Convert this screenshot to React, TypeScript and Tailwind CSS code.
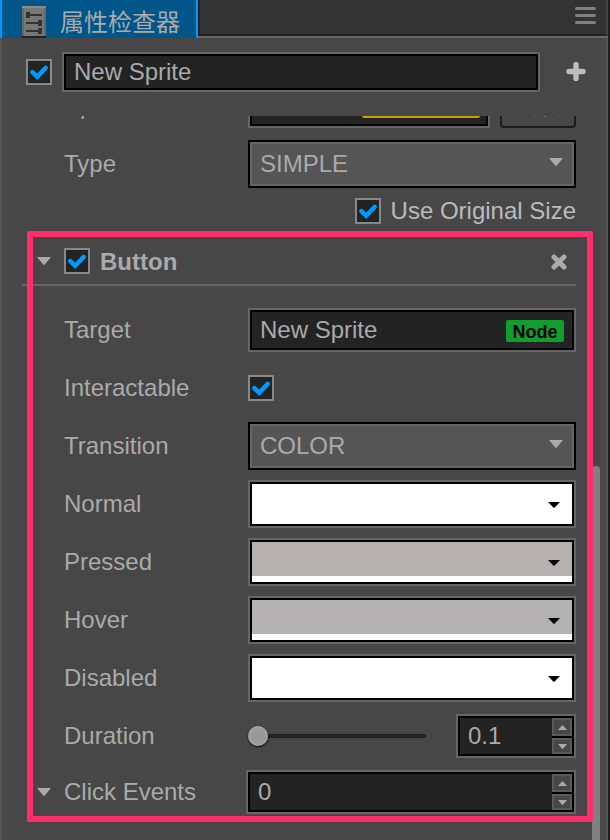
import React from "react";

function Check({ label, id }: { label: string; id?: string }) {
  return (
    <span className="grid h-[26px] w-[26px] shrink-0">
      <input
        id={id}
        type="checkbox"
        defaultChecked
        aria-label={label}
        className="col-start-1 row-start-1 m-0 h-[26px] w-[26px] appearance-none border-2 border-[#888] bg-[#232323]"
      />
      <svg
        viewBox="0 0 26 26"
        className="pointer-events-none col-start-1 row-start-1 h-[26px] w-[26px]"
        aria-hidden="true"
      >
        <path d="M6.4 13.2 L11.2 17.8 L19.6 9" fill="none" stroke="#09f" strokeWidth="4.6" strokeLinecap="round" />
      </svg>
    </span>
  );
}

function Caret({ className }: { className: string }) {
  return (
    <svg viewBox="0 0 14 8" preserveAspectRatio="none" className={className} aria-hidden="true">
      <path d="M0 0H14L7.8 7.4Q7 8 6.2 7.4Z" fill="currentColor" />
    </svg>
  );
}

function Row({ label, htmlFor, children }: { label: string; htmlFor?: string; children: React.ReactNode }) {
  return (
    <div className="flex h-12 items-center">
      <label htmlFor={htmlFor} className="w-[184px] shrink-0">
        {label}
      </label>
      {children}
    </div>
  );
}

function Select({ id, value }: { id: string; value: string }) {
  return (
    <div className="grid h-12 min-w-0 flex-1">
      <select
        id={id}
        defaultValue={value}
        className="col-start-1 row-start-1 h-12 w-full appearance-none border-2 border-black bg-[#555] pl-[10px] text-[24px] leading-[28px] text-[#aaa] shadow-[inset_0_0_0_2px_#666]"
      >
        <option>{value}</option>
      </select>
      <Caret className="pointer-events-none col-start-1 row-start-1 mr-[13px] mt-[18px] h-2 w-[14px] justify-self-end text-[#aaa]" />
    </div>
  );
}

function ColorField({ label, color, alpha }: { label: string; color: string; alpha: boolean }) {
  return (
    <Row label={label}>
      <button
        type="button"
        aria-label={`${label} color`}
        className="flex h-12 min-w-0 flex-1 border-2 border-[#666] bg-black p-[2px]"
      >
        <span className={`grid h-full w-full bg-white ${alpha ? "pb-[6px]" : ""}`}>
          <span className="flex justify-end pr-3 pt-[18px]" style={{ backgroundColor: color }}>
            <Caret className="h-[6px] w-3 shrink-0 text-black" />
          </span>
        </span>
      </button>
    </Row>
  );
}

function NumberField({ id, value, className }: { id: string; value: string; className: string }) {
  return (
    <div className={`flex h-11 border-2 border-[#666] bg-black p-[2px] ${className}`}>
      <input id={id} type="text" inputMode="decimal" defaultValue={value} className="h-9 min-w-0 flex-1 bg-[#232323] pl-2 text-[24px] leading-[28px]" />
      <div className="flex w-5 flex-col gap-[2px]">
        <button type="button" aria-label="Increase" className="flex h-[18px] items-center justify-center border-2 border-[#5a5a5a] bg-[#474747]">
          <Caret className="h-[5px] w-[9px] rotate-180" />
        </button>
        <button type="button" aria-label="Decrease" className="flex h-4 items-center justify-center border-2 border-[#5a5a5a] bg-[#474747]">
          <Caret className="h-[5px] w-[9px]" />
        </button>
      </div>
    </div>
  );
}

function TabIcon() {
  return (
    <svg viewBox="0 0 24 32" className="h-8 w-6 shrink-0" aria-hidden="true">
      <rect width="24" height="32" fill="#666" />
      <rect x="2" y="2" width="20" height="28" fill="#777" />
      <path d="M0 1H24" stroke="#8a8a8a" strokeWidth="2" />
      <path d="M0 31H24" stroke="#222" strokeWidth="2" />
      <path d="M5 9H20M4 17H20M4 25H20" stroke="#333" strokeWidth="2" />
      <path d="M4 6h4v6h-4zM16 14h4v6h-4zM16 22h4v6h-4z" fill="#333" />
    </svg>
  );
}

export default function App() {
  return (
    <main className="flex min-h-screen flex-col border-r-2 border-[#1e1e1e] bg-[#474747] font-['Liberation_Sans','Noto_Sans_CJK_SC',sans-serif] text-[24px] leading-[28px] text-[#aaa]">
      <header className="flex h-[38px]">
        <h1 className="flex w-[198px] shrink-0 items-end gap-[14px] border-x-2 border-[#09f] bg-[#005589] pl-5">
          <TabIcon />
          <span className="h-[29px]">属性检查器</span>
        </h1>
        <div className="flex flex-1 flex-col border-b-2 border-[#666]">
          <div className="flex flex-1 justify-end border-b-2 border-l-2 border-r-2 border-b-[#222] border-l-[#222] border-r-[#444] bg-[#333] pr-[10px] pt-[7px]">
            <button type="button" aria-label="Menu" className="flex h-[17px] w-[21px] flex-col justify-between">
              <span className="h-[3px] w-full rounded-xs bg-[#808080]" />
              <span className="h-[3px] w-full rounded-xs bg-[#808080]" />
              <span className="h-[3px] w-full rounded-xs bg-[#808080]" />
            </button>
          </div>
        </div>
      </header>

      <div className="flex flex-1 flex-col border-l-2 border-r-2 border-[#555]">
        <div className="flex items-center pb-6 pl-6 pr-5 pt-[14px]">
          <Check label="Node active" />
          <input
            type="text"
            aria-label="Node name"
            defaultValue="New Sprite"
            className="ml-[10px] h-10 min-w-0 flex-1 border-2 border-[#666] bg-[#232323] pl-[10px] text-[24px] leading-[28px] shadow-[inset_0_0_0_2px_#000]"
          />
          <button type="button" aria-label="Add component" className="ml-[26px] h-5 w-5 text-[#bbb]">
            <svg viewBox="0 0 20 20" className="h-5 w-5">
              <path d="M10 2.5V16.5M3 9.5H17" stroke="currentColor" strokeWidth="5.4" strokeLinecap="round" />
            </svg>
          </button>
        </div>

        <div className="flex flex-1 overflow-hidden">
          <div className="min-w-0 flex-1 pb-[26px] pl-5">
            <div className="-mt-8 flex h-11 items-center pl-[42px]">
              <span className="w-[184px] shrink-0">Sprite Frame</span>
              <div className="flex h-11 min-w-0 flex-1 items-center justify-end border-2 border-[#666] bg-[#232323] pr-2 shadow-[inset_0_0_0_2px_#000]">
                <span className="h-6 w-[118px] rounded-xs bg-[#c8a000] text-center text-[18px] font-bold leading-[24px] text-black">sprite-frame</span>
              </div>
              <button type="button" className="ml-[10px] h-11 w-[76px] shrink-0 rounded-sm border-2 border-[#1c1c1c] bg-[#484848]">编辑</button>
            </div>

            <div className="flex flex-col gap-[10px] pl-[42px] pt-3">
              <Row label="Type" htmlFor="type">
                <Select id="type" value="SIMPLE" />
              </Row>
              <div className="flex h-[26px] items-center justify-end gap-[10px] text-[#bbb]">
                <Check label="Use Original Size" id="original-size" />
                <label htmlFor="original-size">Use Original Size</label>
              </div>
            </div>

            <section className="relative mt-[7px] pt-[17px]">
              <div className="pointer-events-none absolute -bottom-2 -right-[17px] left-[5px] top-0 z-10 rounded-xs border-[6px] border-[#ff2e6c]" />
              <div className="flex h-[38px] items-start border-b-2 border-[#666]">
                <button type="button" aria-label="Collapse Button" className="ml-[15px] flex h-[26px] w-[14px] items-center">
                  <Caret className="h-2 w-[14px]" />
                </button>
                <div className="ml-[13px] flex flex-1 items-center gap-[10px]">
                  <Check label="Button" id="button-enabled" />
                  <label htmlFor="button-enabled" className="h-[26px] font-bold leading-[28px]">Button</label>
                </div>
                <button type="button" aria-label="Remove Button" className="mr-2 mt-[5px] h-[18px] w-[18px]">
                  <svg viewBox="0 0 18 18" className="h-[18px] w-[18px]">
                    <path d="M4 4L14 14M14 4L4 14" stroke="currentColor" strokeWidth="5" strokeLinecap="round" />
                  </svg>
                </button>
              </div>

              <div className="flex flex-col gap-[10px] pl-[42px] pt-5">
                <Row label="Target">
                  <button type="button" aria-label="Target node" className="flex h-11 min-w-0 flex-1 items-center justify-between border-2 border-[#666] bg-[#232323] pl-[10px] pr-[10px] text-left shadow-[inset_0_0_0_2px_#000]">
                    <span>New Sprite</span>
                    <span className="mt-[2px] h-[22px] w-[58px] rounded-xs bg-[#119e2c] text-center text-[18px] font-bold leading-[24px] text-black">Node</span>
                  </button>
                </Row>
                <Row label="Interactable" htmlFor="interactable">
                  <Check label="Interactable" id="interactable" />
                </Row>
                <Row label="Transition" htmlFor="transition">
                  <Select id="transition" value="COLOR" />
                </Row>
                <ColorField label="Normal" color="#ffffff" alpha={false} />
                <ColorField label="Pressed" color="#b7b2b1" alpha />
                <ColorField label="Hover" color="#b3b1b2" alpha />
                <ColorField label="Disabled" color="#ffffff" alpha={false} />
                <Row label="Duration" htmlFor="duration">
                  <input
                    type="range"
                    aria-label="Duration slider"
                    min="0"
                    max="5"
                    step="0.1"
                    defaultValue="0"
                    className="mr-[30px] h-5 min-w-0 flex-1 appearance-none bg-[linear-gradient(#232323,#232323)] bg-[length:100%_4px] bg-center bg-no-repeat [&::-webkit-slider-thumb]:h-5 [&::-webkit-slider-thumb]:w-5 [&::-webkit-slider-thumb]:appearance-none [&::-webkit-slider-thumb]:rounded-full [&::-webkit-slider-thumb]:bg-[radial-gradient(#999_50%,#bbb)] [&::-webkit-slider-thumb]:shadow-[0_1px_2px_#000]"
                  />
                  <NumberField id="duration" value="0.1" className="w-[120px] shrink-0" />
                </Row>
              </div>

              <div className="mt-[10px] flex h-11 items-center pl-[15px]">
                <button type="button" aria-label="Collapse Click Events" className="mr-[13px] flex w-[14px] items-center">
                  <Caret className="h-2 w-[14px]" />
                </button>
                <label htmlFor="click-events" className="w-[182px] shrink-0">Click Events</label>
                <NumberField id="click-events" value="0" className="min-w-0 flex-1" />
              </div>
            </section>
          </div>
          <div className="ml-4 mr-[6px] mt-[350px] w-2 shrink-0 rounded-t-sm bg-[#808080]" />
        </div>
      </div>
    </main>
  );
}
